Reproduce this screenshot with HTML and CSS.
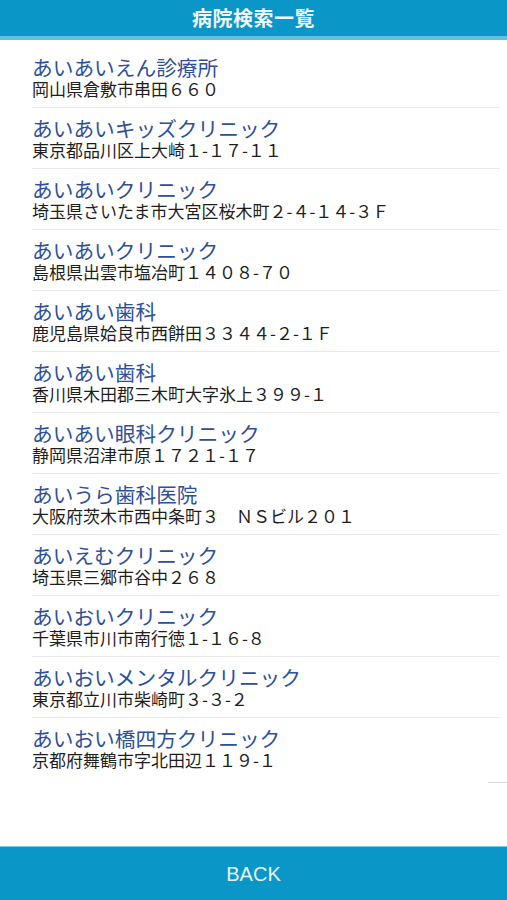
FILE: index.html
```html
<!DOCTYPE html>
<html lang="ja">
<head>
<meta charset="utf-8">
<title>病院検索一覧</title>
<link rel="stylesheet" href="styles.css">
</head>
<body>
<div class="app">
  <header class="topbar"><h1 class="title">病院検索一覧</h1></header>
  <main class="content">
    <ul class="list">
      <li class="item"><div class="name">あいあいえん診療所</div><div class="addr">岡山県倉敷市串田６６０</div></li>
      <li class="item"><div class="name">あいあいキッズクリニック</div><div class="addr">東京都品川区上大崎１-１７-１１</div></li>
      <li class="item"><div class="name">あいあいクリニック</div><div class="addr">埼玉県さいたま市大宮区桜木町２-４-１４-３Ｆ</div></li>
      <li class="item"><div class="name">あいあいクリニック</div><div class="addr">島根県出雲市塩冶町１４０８-７０</div></li>
      <li class="item"><div class="name">あいあい歯科</div><div class="addr">鹿児島県姶良市西餅田３３４４-２-１Ｆ</div></li>
      <li class="item"><div class="name">あいあい歯科</div><div class="addr">香川県木田郡三木町大字氷上３９９-１</div></li>
      <li class="item"><div class="name">あいあい眼科クリニック</div><div class="addr">静岡県沼津市原１７２１-１７</div></li>
      <li class="item"><div class="name">あいうら歯科医院</div><div class="addr">大阪府茨木市西中条町３　ＮＳビル２０１</div></li>
      <li class="item"><div class="name">あいえむクリニック</div><div class="addr">埼玉県三郷市谷中２６８</div></li>
      <li class="item"><div class="name">あいおいクリニック</div><div class="addr">千葉県市川市南行徳１-１６-８</div></li>
      <li class="item"><div class="name">あいおいメンタルクリニック</div><div class="addr">東京都立川市柴崎町３-３-２</div></li>
      <li class="item"><div class="name">あいおい橋四方クリニック</div><div class="addr">京都府舞鶴市字北田辺１１９-１</div></li>
    </ul>
    <div class="scrollmark"></div>
  </main>
  <footer class="bottombar"><span class="back">BACK</span></footer>
</div>
</body>
</html>
```
FILE: styles.css
```css
* { box-sizing: border-box; }
html, body { margin: 0; padding: 0; background: #fff; }
body {
  font-family: "Noto Sans CJK JP", "Noto Sans", sans-serif;
}
.app {
  display: flex;
  flex-direction: column;
  height: 900px;
  width: 507px;
}
.topbar {
  height: 40px;
  background: #0a96c6;
  border-bottom: 4px solid #63c0e3;
  display: flex;
  align-items: center;
  justify-content: center;
  flex: none;
  padding-bottom: 1px;
}
.title {
  margin: 0;
  color: #f2f8fb;
  font-size: 20px;
  font-weight: 700;
  line-height: 24px;
  letter-spacing: 0.5px;
}
.content {
  flex: 1;
  display: flex;
  flex-direction: column;
}
.list {
  list-style: none;
  margin: 0;
  padding: 7px 7px 0 32px;
}
.item {
  padding: 9px 0 7px;
  border-bottom: 1px solid #e9e9e9;
}
.item:last-child { border-bottom: none; padding-bottom: 8px; }
.name {
  color: #2e509a;
  font-size: 20.7px;
  line-height: 22px;
  white-space: nowrap;
}
.addr {
  color: #1e1e1e;
  font-size: 17px;
  line-height: 22px;
  white-space: nowrap;
}
.scrollmark {
  align-self: flex-end;
  width: 19px;
  height: 1px;
  margin-top: 3px;
  background: #d8d8d8;
}
.bottombar {
  height: 54px;
  flex: none;
  background: #0a96c6;
  border-top: 1px solid #6fd0ea;
  display: flex;
  align-items: center;
  justify-content: center;
}
.back {
  color: #e6f5fb;
  font-family: "Liberation Sans", Arial, sans-serif;
  font-size: 20px;
  line-height: 24px;
}
```
